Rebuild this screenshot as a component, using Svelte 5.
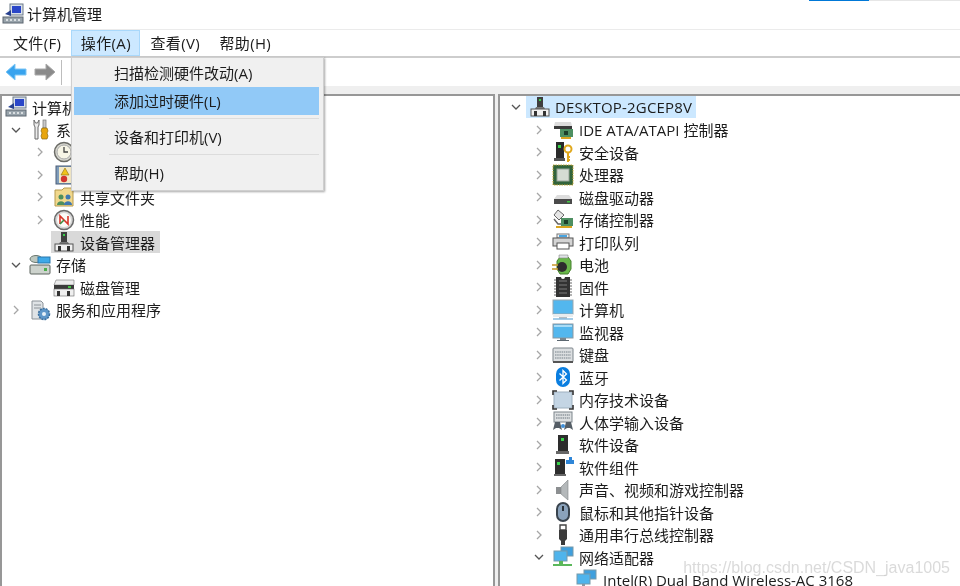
<script lang="ts">
    type Row = { label: string; icon: string; depth: number; arrow?: "open" | "closed"; selected?: boolean };

    const leftTree: Row[] = [
        { label: "计算机管理(本地)", icon: "computer", depth: 0 },
        { label: "系统工具", icon: "tools", depth: 1, arrow: "open" },
        { label: "任务计划程序", icon: "clock", depth: 2, arrow: "closed" },
        { label: "事件查看器", icon: "event", depth: 2, arrow: "closed" },
        { label: "共享文件夹", icon: "shared", depth: 2, arrow: "closed" },
        { label: "性能", icon: "perf", depth: 2, arrow: "closed" },
        { label: "设备管理器", icon: "tower", depth: 2, selected: true },
        { label: "存储", icon: "storage", depth: 1, arrow: "open" },
        { label: "磁盘管理", icon: "diskmgmt", depth: 2 },
        { label: "服务和应用程序", icon: "services", depth: 1, arrow: "closed" },
    ];

    const rightTree: Row[] = [
        { label: "IDE ATA/ATAPI 控制器", icon: "ide", depth: 1, arrow: "closed" },
        { label: "安全设备", icon: "security", depth: 1, arrow: "closed" },
        { label: "处理器", icon: "cpu", depth: 1, arrow: "closed" },
        { label: "磁盘驱动器", icon: "drive", depth: 1, arrow: "closed" },
        { label: "存储控制器", icon: "storctl", depth: 1, arrow: "closed" },
        { label: "打印队列", icon: "printer", depth: 1, arrow: "closed" },
        { label: "电池", icon: "battery", depth: 1, arrow: "closed" },
        { label: "固件", icon: "firmware", depth: 1, arrow: "closed" },
        { label: "计算机", icon: "pc", depth: 1, arrow: "closed" },
        { label: "监视器", icon: "monitor", depth: 1, arrow: "closed" },
        { label: "键盘", icon: "keyboard", depth: 1, arrow: "closed" },
        { label: "蓝牙", icon: "bluetooth", depth: 1, arrow: "closed" },
        { label: "内存技术设备", icon: "memory", depth: 1, arrow: "closed" },
        { label: "人体学输入设备", icon: "hid", depth: 1, arrow: "closed" },
        { label: "软件设备", icon: "softdev", depth: 1, arrow: "closed" },
        { label: "软件组件", icon: "softcomp", depth: 1, arrow: "closed" },
        { label: "声音、视频和游戏控制器", icon: "sound", depth: 1, arrow: "closed" },
        { label: "鼠标和其他指针设备", icon: "mouse", depth: 1, arrow: "closed" },
        { label: "通用串行总线控制器", icon: "usb", depth: 1, arrow: "closed" },
        { label: "网络适配器", icon: "network", depth: 1, arrow: "open" },
        { label: "Intel(R) Dual Band Wireless-AC 3168", icon: "netcard", depth: 2 },
    ];

    const menus = ["文件(F)", "操作(A)", "查看(V)", "帮助(H)"];
</script>

{#snippet icon(name: string)}
    <svg class="icon" viewBox="0 0 22 22" width="22" height="22" aria-hidden="true">
        {#if name === "computer"}
            <rect x="8" y="1" width="13" height="11" fill="#d8e0ea" stroke="#6d7a88" />
            <rect x="10" y="3" width="9" height="7" fill="#2a46c8" />
            <path d="M3 11l6-4v6z" fill="#27408f" />
            <rect x="1" y="14" width="20" height="6" fill="#98a3ab" stroke="#5c6670" />
            <path d="M4 17h2M8 17h2M12 17h2M16 17h2" stroke="#eef2f4" stroke-width="1.500" />
        {:else if name === "tools"}
            <path d="M5 1v5l1 2v12h3V8l1-2V1L8.500 4H6.500z" fill="#ececec" stroke="#6b6b6b" />
            <rect x="14" y="1" width="3" height="8" fill="#c9c9c9" stroke="#777" stroke-width=".7" />
            <path d="M13 9h5l1 3-1 2 1 3-1 3h-5l-1-3 1-3-1-2z" fill="#e8a50c" stroke="#8c6a10" stroke-width=".7" />
        {:else if name === "clock"}
            <circle cx="11" cy="11" r="9.500" fill="#d8d8d0" stroke="#6b6b66" stroke-width="1.500" />
            <circle cx="11" cy="11" r="7" fill="#f7f5e6" stroke="#aaa" />
            <path d="M11 6v5h4" fill="none" stroke="#444" stroke-width="1.300" />
        {:else if name === "event"}
            <rect x="3" y="2" width="16" height="18" fill="#7f9dbb" stroke="#4c5f78" />
            <rect x="6" y="3" width="12" height="16" fill="#f3e9c8" />
            <path d="M12 4l4 7H8z" fill="#f0c419" stroke="#8b6b10" stroke-width=".6" />
            <circle cx="11" cy="15" r="3.200" fill="#d0352f" />
        {:else if name === "shared"}
            <path d="M2 4h7l2-2h9v18H2z" fill="#f1d88c" stroke="#b69a4e" />
            <circle cx="8" cy="11" r="2.500" fill="#4f8f5c" />
            <path d="M4 19c0-5 8-5 8 0z" fill="#4f8f5c" />
            <circle cx="15" cy="11" r="2.500" fill="#3f78b0" />
            <path d="M11 19c0-5 8-5 8 0z" fill="#3f78b0" />
        {:else if name === "perf"}
            <circle cx="11" cy="11" r="9.500" fill="#d6d6d6" stroke="#6a6a6a" stroke-width="1.500" />
            <circle cx="11" cy="11" r="7" fill="#fbfbf8" />
            <path d="M7 15V7l8 8V7" fill="none" stroke="#d8352a" stroke-width="1.600" />
            <path d="M7 15l4-4" stroke="#3e8a3e" stroke-width="1.600" />
        {:else if name === "tower"}
            <rect x="8" y="1" width="6" height="10" fill="#3f3f3f" />
            <rect x="10" y="3" width="2" height="2" fill="#38d14a" />
            <path d="M7 11h8l1 2H6z" fill="#777" />
            <rect x="2" y="13" width="18" height="7" fill="#f0f0f0" stroke="#555" />
            <rect x="5" y="15" width="3" height="5" fill="#333" />
            <rect x="14" y="15" width="3" height="5" fill="#333" />
        {:else if name === "storage"}
            <ellipse cx="7" cy="5" rx="6" ry="3.500" fill="#bcc7bf" stroke="#6a776e" />
            <rect x="9" y="3" width="12" height="6" fill="#3fa9e8" stroke="#2a79ad" />
            <rect x="1" y="11" width="20" height="9" rx="1" fill="#cdd3cd" stroke="#5d655f" />
            <rect x="15" y="14" width="3" height="3" fill="#4cae4c" />
        {:else if name === "diskmgmt"}
            <path d="M3 4h18v5H1z" fill="#ececec" stroke="#777" stroke-width=".6" />
            <rect x="1" y="9" width="20" height="4" fill="#3a3a3a" />
            <rect x="15" y="10" width="3" height="2" fill="#45c445" />
            <rect x="1" y="13" width="20" height="7" fill="#efefef" stroke="#666" stroke-width=".6" />
            <rect x="4" y="15" width="3" height="5" fill="#333" />
            <rect x="14" y="15" width="3" height="5" fill="#333" />
        {:else if name === "services"}
            <path d="M3 2h9l2 2v16H3z" fill="#dfe3e6" stroke="#8b9298" />
            <path d="M5 6h7M5 9h7" stroke="#8b9298" />
            <circle cx="15" cy="15" r="5.500" fill="#5f97c9" stroke="#3b6f9e" stroke-dasharray="2 1" stroke-width="1.500" />
            <circle cx="15" cy="15" r="2" fill="#e8f1f8" />
        {:else if name === "ide"}
            <path d="M3 3h16l1 4H2z" fill="#dcdcdc" />
            <rect x="2" y="7" width="18" height="3" fill="#3a3a3a" />
            <rect x="8" y="10" width="13" height="8" fill="#4d8f62" />
            <rect x="12" y="12" width="4" height="4" fill="#1c3f2a" />
            <rect x="9" y="18" width="10" height="2" fill="#d9a520" />
        {:else if name === "security"}
            <rect x="4" y="1" width="8" height="16" fill="#2a2a2a" />
            <rect x="6" y="4" width="3" height="3" fill="#38d14a" />
            <rect x="2" y="17" width="11" height="3" fill="#555" />
            <circle cx="16" cy="8" r="3.500" fill="none" stroke="#e0a81c" stroke-width="2" />
            <path d="M16 11v10M16 16h2M16 19h2" stroke="#e0a81c" stroke-width="2" />
        {:else if name === "cpu"}
            <rect x="1" y="1" width="20" height="20" fill="#31633b" stroke="#c7a93a" stroke-dasharray="1.500 1" />
            <rect x="5" y="5" width="12" height="12" fill="#d5dbd3" stroke="#9aa59a" />
        {:else if name === "drive"}
            <path d="M5 9h12l3 4H2z" fill="#dddddd" />
            <rect x="2" y="13" width="18" height="5" fill="#4a4a4a" />
            <rect x="15" y="15" width="3" height="1.500" fill="#45c445" />
        {:else if name === "storctl"}
            <path d="M6 1l6 5-5 5-5-5z" fill="#e6e6e6" stroke="#666" />
            <path d="M2 10l4 5h4" fill="none" stroke="#666" stroke-width="1.500" />
            <rect x="9" y="9" width="12" height="8" fill="#4d8f62" />
            <rect x="12" y="11" width="4" height="4" fill="#1c3f2a" />
            <rect x="4" y="17" width="16" height="2" fill="#d9a520" />
        {:else if name === "printer"}
            <rect x="5" y="3" width="12" height="4" fill="#f5f5f5" stroke="#777" />
            <rect x="7" y="4" width="8" height="2" fill="#49a4e0" />
            <rect x="1" y="7" width="20" height="8" fill="#d4d4d4" stroke="#555" />
            <rect x="5" y="12" width="12" height="6" fill="#fff" stroke="#555" />
        {:else if name === "battery"}
            <path d="M8 3h8l3 4v8l-3 5H8l-3-5V7z" fill="#69b84a" stroke="#47802f" />
            <path d="M7 1h9v3H7z" fill="#dfe3e6" stroke="#888" stroke-width=".6" />
            <circle cx="10" cy="13" r="5" fill="#2e2e2e" />
            <path d="M0 11h6M0 15h6" stroke="#c8962a" stroke-width="1.500" />
        {:else if name === "firmware"}
            <path d="M4 1h5a2 2 0 0 0 4 0h5v20H4z" fill="#333" />
            <path d="M4 4H2M4 7H2M4 10H2M4 13H2M4 16H2M4 19H2M18 4h2M18 7h2M18 10h2M18 13h2M18 16h2M18 19h2" stroke="#666" />
            <path d="M7 5h8M7 9h8M7 13h8M7 17h8" stroke="#7d7d7d" />
        {:else if name === "pc"}
            <rect x="1" y="1" width="20" height="14" fill="#53b7ee" stroke="#9aa7af" />
            <path d="M1 15h20v3H1z" fill="#e8ecee" />
            <path d="M7 18h8v1.500H7z" fill="#b4bcc2" />
            <path d="M1 20h20" stroke="#4b9ad0" />
        {:else if name === "monitor"}
            <rect x="1" y="3" width="20" height="14" fill="#53b7ee" stroke="#8b98a1" />
            <rect x="2" y="4" width="18" height="2" fill="#a8dcf6" />
            <rect x="8" y="17" width="6" height="2" fill="#7a868e" />
            <rect x="5" y="19" width="12" height="1" fill="#5c6770" />
        {:else if name === "keyboard"}
            <rect x="1" y="4" width="20" height="14" rx="1" fill="#dcdfe1" stroke="#7d858b" />
            <path d="M3 8h16M3 11h16M3 14h16" stroke="#97a0a6" stroke-width="1.600" stroke-dasharray="1.500 .7" />
            <rect x="1" y="17" width="20" height="2" fill="#555" />
        {:else if name === "bluetooth"}
            <rect x="4" y="1" width="14" height="20" rx="7" fill="#0a7ee0" />
            <path d="M7.500 7.500l7 6.500-3.500 3.500V4.500l3.500 3.500-7 6.500" fill="none" stroke="#fff" stroke-width="1.300" />
        {:else if name === "memory"}
            <rect x="2" y="3" width="18" height="16" rx="1" fill="#c4d5e4" stroke="#9eb0bf" />
            <path d="M1 6V2h4M17 2h4v4M21 16v4h-4M5 20H1v-4" fill="none" stroke="#333" stroke-width="1.600" />
        {:else if name === "hid"}
            <rect x="2" y="1" width="18" height="10" fill="#dcdfe1" stroke="#7d858b" />
            <path d="M4 4h14M4 7h14" stroke="#8f989e" stroke-width="1.400" stroke-dasharray="1.500 .7" />
            <path d="M1 19l2-8h5l2 8-3-2H4z" fill="#555e66" />
            <path d="M12 19l2-8h5l2 8-3-2h-3z" fill="#555e66" />
            <circle cx="11" cy="15" r="2" fill="#3f8ed6" />
        {:else if name === "softdev"}
            <rect x="6" y="1" width="10" height="16" fill="#2d2d2d" />
            <rect x="9" y="4" width="3" height="3" fill="#38d14a" />
            <rect x="4" y="17" width="13" height="3" fill="#666" />
        {:else if name === "softcomp"}
            <rect x="3" y="3" width="10" height="15" fill="#2d2d2d" />
            <rect x="5" y="6" width="3" height="3" fill="#38d14a" />
            <rect x="2" y="18" width="12" height="2" fill="#666" />
            <path d="M14 4h3V1h3v3h2v4h-8z" fill="#2f86d8" />
        {:else if name === "sound"}
            <rect x="4" y="8" width="5" height="7" fill="#8c8f91" />
            <path d="M9 8l7-7v20l-7-6z" fill="#b4b8ba" stroke="#808486" stroke-width=".6" />
        {:else if name === "mouse"}
            <rect x="4" y="1" width="14" height="20" rx="7" fill="#39434d" />
            <rect x="6" y="3" width="10" height="16" rx="5" fill="#8aa2bb" />
            <rect x="10" y="5" width="2" height="5" fill="#2a323a" />
        {:else if name === "usb"}
            <path d="M8 1h6v5H8z" fill="none" stroke="#444" stroke-width="1.400" />
            <path d="M7 6h8v9l-2 2v4H9v-4l-2-2z" fill="#3b3b3b" />
        {:else if name === "network"}
            <rect x="9" y="1" width="12" height="9" fill="#3f9fdd" stroke="#79a" />
            <rect x="2" y="5" width="13" height="10" fill="#4fb4ec" stroke="#79a" />
            <rect x="7" y="15" width="4" height="3" fill="#5bb85b" />
            <rect x="1" y="18" width="19" height="2" fill="#5bb85b" />
        {:else if name === "netcard"}
            <rect x="8" y="1" width="12" height="9" fill="#3f9fdd" stroke="#79a" />
            <rect x="1" y="5" width="13" height="10" fill="#4fb4ec" stroke="#79a" />
            <rect x="6" y="15" width="3" height="4" fill="#8a98a2" />
        {/if}
    </svg>
{/snippet}

{#snippet tree(rows: Row[])}
    {#each rows as row}
        <div class="row" class:d0={row.depth === 0} class:d1={row.depth === 1} class:d2={row.depth === 2}>
            <span class="arrow">
                {#if row.arrow === "open"}
                    <svg viewBox="0 0 10 10" width="10" height="10"><path d="M1 3l4 4 4-4" fill="none" stroke="#555" stroke-width="1.300" /></svg>
                {:else if row.arrow === "closed"}
                    <svg viewBox="0 0 10 10" width="10" height="10"><path d="M3 1l4 4-4 4" fill="none" stroke="#a6a6a6" stroke-width="1.300" /></svg>
                {/if}
            </span>
            <span class="node" class:selected={row.selected}>
                {@render icon(row.icon)}
                <span class="label">{row.label}</span>
            </span>
        </div>
    {/each}
{/snippet}

<div class="window">
    <div class="progress"><span></span></div>
    <header class="titlebar">
        {@render icon("computer")}
        <span>计算机管理</span>
    </header>

    <nav class="menubar">
        {#each menus as menu, i}
            <span class="menu" class:active={i === 1}>{menu}</span>
        {/each}
    </nav>

    <div class="toolbar">
        <svg viewBox="0 0 22 20" width="22" height="20" aria-hidden="true">
            <path d="M1 10l9-8v5h11v6H10v5z" fill="#38a3ee" stroke="#7cc6f5" />
        </svg>
        <svg viewBox="0 0 22 20" width="22" height="20" aria-hidden="true">
            <path d="M21 10l-9-8v5H1v6h11v5z" fill="#8a8a8a" stroke="#a8a8a8" />
        </svg>
        <i class="tool-sep"></i>
    </div>

    <main class="panes">
        <section class="pane left">
            {@render tree(leftTree)}
        </section>
        <section class="pane right">
            <div class="row d0">
                <span class="arrow">
                    <svg viewBox="0 0 10 10" width="10" height="10"><path d="M1 3l4 4 4-4" fill="none" stroke="#555" stroke-width="1.300" /></svg>
                </span>
                <span class="node root">
                    {@render icon("tower")}
                    <span class="label">DESKTOP-2GCEP8V</span>
                </span>
            </div>
            {@render tree(rightTree)}
        </section>
    </main>

    <div class="dropdown">
        <div class="item">扫描检测硬件改动(A)</div>
        <div class="item hot">添加过时硬件(L)</div>
        <div class="sep"></div>
        <div class="item">设备和打印机(V)</div>
        <div class="sep"></div>
        <div class="item">帮助(H)</div>
    </div>

    <div class="watermark">https://blog.csdn.net/CSDN_java1005</div>
</div>

<style>
    :global(body) {
        margin: 0;
        background: #fff;
    }

    .window {
        position: relative;
        width: 960px;
        height: 586px;
        overflow: hidden;
        display: flex;
        flex-direction: column;
        font-family: "Open Sans", "Noto Sans CJK SC", sans-serif;
        font-size: 15px;
        color: #1c1c1c;
        filter: blur(0.4px);
    }

    .progress {
        position: absolute;
        top: 0;
        right: 0;
        left: 809px;
        height: 1px;
        background: #e6e6e6;
    }

    .progress span {
        display: block;
        width: 60px;
        height: 1px;
        background: #0078d7;
    }

    .titlebar {
        height: 27px;
        padding: 0 0 2px 2px;
        flex: none;
        display: flex;
        align-items: center;
        gap: 3px;
        border-bottom: 1px solid #ebebeb;
    }

    .menubar {
        height: 26px;
        flex: none;
        display: flex;
        align-items: center;
        padding-left: 3px;
        border-bottom: 2px solid #cdcdcd;
    }

    .menu {
        height: 26px;
        line-height: 26px;
        padding: 0 9.5px 0 10px;
        box-sizing: border-box;
        letter-spacing: 0.35px;
    }

    .menu.active {
        background: #cce8ff;
        box-shadow: inset 0 0 0 1px #a9d8fb;
    }

    .toolbar {
        height: 28px;
        flex: none;
        display: flex;
        align-items: center;
        gap: 7px;
        padding-left: 5px;
    }

    .tool-sep {
        width: 1px;
        height: 25px;
        margin-left: -2px;
        background: #bdbdbd;
    }

    .panes {
        flex: 1;
        min-height: 0;
        display: flex;
        gap: 3px;
        padding-top: 8px;
        background: #efefef;
    }

    .pane {
        background: #fff;
        border-top: 2px solid #979797;
        border-left: 2px solid #979797;
        overflow: hidden;
    }

    .left {
        width: 491px;
        flex: none;
        border-right: 2px solid #979797;
    }

    .right {
        flex: 1;
    }

    .row {
        height: 22.5px;
        display: flex;
        align-items: center;
        white-space: nowrap;
    }

    .d1 {
        padding-left: 9px;
    }

    .d2 {
        padding-left: 33px;
    }

    .right .d0 {
        padding-left: 11px;
    }

    .right .d1 {
        padding-left: 34px;
    }

    .right .d2 {
        padding-left: 58px;
    }

    .arrow {
        width: 10px;
        height: 10px;
        flex: none;
        display: flex;
    }

    .left .d0 .arrow {
        width: 0;
    }

    .node {
        display: inline-flex;
        align-items: center;
        gap: 5px;
        height: 22px;
        margin-left: 6px;
        padding: 0 5px 0 2px;
    }

    .left .d0 .node {
        margin-left: 1px;
    }

    .selected {
        background: #d9d9d9;
    }

    .root {
        background: #cce8ff;
        gap: 4px;
        margin-left: 5px;
        padding: 0 4px 0 3px;
        letter-spacing: 0.2px;
    }

    .icon {
        flex: none;
    }

    .dropdown {
        position: absolute;
        left: 71px;
        top: 57px;
        width: 253px;
        height: 134px;
        box-sizing: border-box;
        padding: 1px 4px 0 2px;
        background: #f0f0f0;
        border: 1px solid #cfcfcf;
        box-shadow: 1px 1px 2px rgba(0, 0, 0, 0.35);
    }

    .item {
        height: 28px;
        line-height: 28px;
        padding-left: 40px;
    }

    .hot {
        background: #91c9f7;
    }

    .sep {
        height: 1px;
        margin: 2.5px 0 4.5px 35px;
        background: #dcdcdc;
    }

    .watermark {
        position: absolute;
        right: 10px;
        top: 559px;
        font-family: "Liberation Sans", sans-serif;
        font-size: 16px;
        color: rgba(150, 150, 150, 0.35);
    }
</style>
